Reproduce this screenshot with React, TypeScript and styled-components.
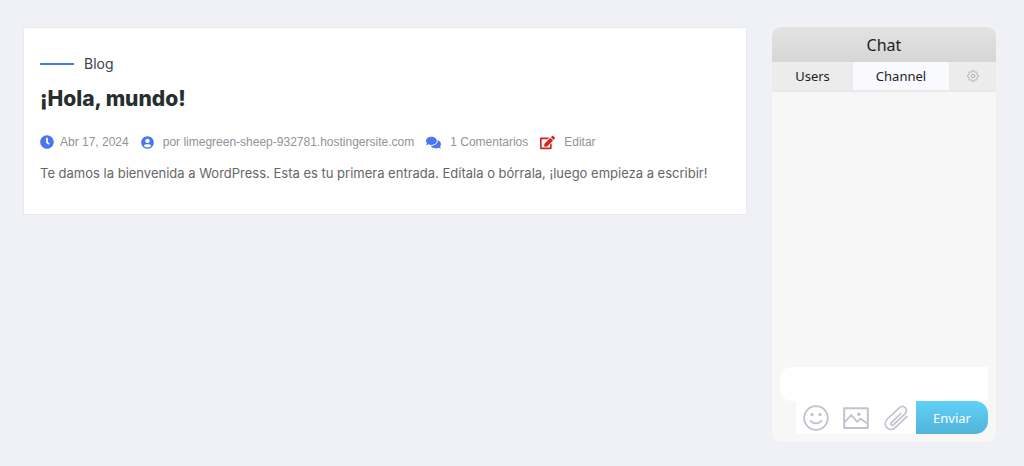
import React, { useState } from "react";
import styled, { createGlobalStyle } from "styled-components";
import { FaClock, FaUserCircle, FaComments, FaEdit } from "react-icons/fa";

const GlobalStyle = createGlobalStyle`
  * { box-sizing: border-box; }
  body { margin: 0; background: #f0f1f6; font-family: "Liberation Sans", Arial, sans-serif; }
  button, input { font: inherit; border: 0; padding: 0; margin: 0; background: none; }
  a { color: inherit; text-decoration: none; }
`;

const Page = styled.div`
  display: flex;
  align-items: flex-start;
  gap: 25px;
  min-height: 100vh;
  padding: 27px 28px 24px 23px;
`;

const Post = styled.article`
  flex: 1;
  min-width: 0;
  padding: 24px 16px 28px;
  background: #fff;
  border: 1px solid #e9eaee;
`;

const Category = styled.a`
  display: flex;
  align-items: center;
  gap: 10px;
  width: fit-content;
  font: 14px/24px Inter, sans-serif;
  color: #3d4143;

  &::before {
    content: "";
    width: 34px;
    height: 2px;
    background: #4a75f5;
  }
`;

const Title = styled.h1`
  margin: 5px 0 0;
  font: 800 21px/36px Inter, sans-serif;
  color: #272e2e;
`;

const Meta = styled.ul`
  display: flex;
  flex-wrap: wrap;
  gap: 0 12px;
  margin: 15px 0 0;
  padding: 0;
  list-style: none;
  font-size: 12px;
  line-height: 20px;
  color: #909497;
`;

const MetaItem = styled.li<{ $gap?: number; $tone?: string }>`
  display: flex;
  align-items: center;
  gap: ${(p) => p.$gap ?? 9}px;

  svg { color: ${(p) => p.$tone ?? "#4a75f5"}; }
`;

const Excerpt = styled.p`
  margin: 9px 0 0;
  padding-bottom: 1px;
  font: 13px/24px Inter, sans-serif;
  color: #666;
`;

const ChatPanel = styled.aside`
  display: flex;
  flex-direction: column;
  flex: 0 0 224px;
  min-height: calc(100vh - 51px);
  border-radius: 9px;
  overflow: hidden;
  background: #f7f7f7;
  font-family: "Noto Sans", sans-serif;
`;

const ChatTitle = styled.h2`
  margin: 0;
  padding-top: 2px;
  font-weight: 400;
  font-size: 16px;
  line-height: 33px;
  text-align: center;
  color: #222;
  background: linear-gradient(#e3e3e3, #d6d6d6);
`;

const Tabs = styled.div`
  display: grid;
  grid-template-columns: 81fr 96fr 47fr;
  height: 30px;
  padding-bottom: 1px;
  background: #ececec;
  border-bottom: 1px solid #e6e6e6;
`;

const Tab = styled.button<{ $active?: boolean }>`
  display: flex;
  align-items: center;
  justify-content: center;
  border-radius: 3px 3px 0 0;
  background: ${(p) => (p.$active ? "#f9fafd" : "transparent")};
  color: #222;
`;

const TabLabel = styled.span`
  font-size: 13px;
  line-height: 18px;
`;

const Messages = styled.div`
  flex: 1;
`;

const Composer = styled.form`
  display: flex;
  flex-direction: column;
  align-items: flex-end;
  padding: 0 8px;
  padding-bottom: 8px;
`;

const MessageInput = styled.input`
  width: 100%;
  height: 34px;
  padding: 0 12px;
  border-radius: 12px 0 0 12px;
  background: #fff;
  outline: none;
`;

const Actions = styled.div`
  display: flex;
  height: 33px;
`;

const ToolButton = styled.button`
  display: flex;
  align-items: center;
  justify-content: center;
  width: 40px;
  background: #fff;
  color: #c0c3cc;
`;

const SendButton = styled.button`
  width: 72px;
  border-radius: 0 13px 13px 0;
  background: linear-gradient(#61d0f8, #50b4d8);
  color: #fff;
  font-size: 13px;
`;

const Line = styled.svg`
  display: block;
  fill: none;
  stroke: currentColor;
  stroke-linecap: round;
  stroke-linejoin: round;
`;

const GearIcon = () => (
  <Line width="12" height="12" viewBox="0 0 24 24" strokeWidth="2" color="#b0b0b0">
    <path d="M9.8 3.6 L10.5 1.3 H13.5 L14.2 3.6 L16.4 4.5 L18.5 3.4 L20.6 5.5 L19.5 7.6 L20.4 9.8 L22.7 10.5 V13.5 L20.4 14.2 L19.5 16.4 L20.6 18.5 L18.5 20.6 L16.4 19.5 L14.2 20.4 L13.5 22.7 H10.5 L9.8 20.4 L7.6 19.5 L5.5 20.6 L3.4 18.5 L4.5 16.4 L3.6 14.2 L1.3 13.5 V10.5 L3.6 9.8 L4.5 7.6 L3.4 5.5 L5.5 3.4 L7.6 4.5 Z" />
    <circle cx="12" cy="12" r="3.5" />
  </Line>
);

const SmileIcon = () => (
  <Line width="26" height="26" viewBox="0 0 26 26" strokeWidth="1.8">
    <circle cx="13" cy="13" r="11.8" />
    <circle cx="9" cy="9.7" r="1.6" fill="currentColor" stroke="none" />
    <circle cx="17" cy="9.7" r="1.6" fill="currentColor" stroke="none" />
    <path d="M7.8 15.8 C9.8 19.3 16.2 19.3 18.2 15.8" />
  </Line>
);

const ImageIcon = () => (
  <Line width="26" height="26" viewBox="0 0 26 26" strokeWidth="1.8">
    <path d="M1.2 3.2 H24.8 V23 H1.2 Z" strokeWidth="2" />
    <path d="M1.8 17 L8.3 10 L14.2 16.8 L17.5 13.7 L24.2 18.3" />
    <circle cx="15.8" cy="9.3" r="1.8" fill="currentColor" stroke="none" />
  </Line>
);

const ClipIcon = () => (
  <Line width="26" height="26" viewBox="0 0 26 26" strokeWidth="1.7">
    <path d="M18 8.5 L8.6 17.3 C6.8 19.2 8.6 21.3 10.6 19.7 L21.7 9.2 C26 4.6 20.6 -1.2 16.2 2.8 L4.4 14 C-1.6 20.2 6.3 28.2 12.5 22.4 L24 11.4" />
  </Line>
);

export default function App() {
  const [tab, setTab] = useState("channel");
  return (
    <>
      <GlobalStyle />
      <Page>
        <Post>
          <Category href="#blog">Blog</Category>
          <Title>¡Hola, mundo!</Title>
          <Meta>
            <MetaItem $gap={6}><FaClock size={14} /><a href="#date">Abr 17, 2024</a></MetaItem>
            <MetaItem><FaUserCircle size={13} /><a href="#author">por limegreen-sheep-932781.hostingersite.com</a></MetaItem>
            <MetaItem><FaComments size={15} /><a href="#comments">1 Comentarios</a></MetaItem>
            <MetaItem $tone="#d4221f"><FaEdit size={15} /><a href="#edit">Editar</a></MetaItem>
          </Meta>
          <Excerpt>Te damos la bienvenida a WordPress. Esta es tu primera entrada. Edítala o bórrala, ¡luego empieza a escribir!</Excerpt>
        </Post>
        <ChatPanel>
          <ChatTitle>Chat</ChatTitle>
          <Tabs role="tablist">
            <Tab type="button" role="tab" aria-selected={tab === "users"} $active={tab === "users"} onClick={() => setTab("users")}><TabLabel>Users</TabLabel></Tab>
            <Tab type="button" role="tab" aria-selected={tab === "channel"} $active={tab === "channel"} onClick={() => setTab("channel")}><TabLabel>Channel</TabLabel></Tab>
            <Tab type="button" role="tab" aria-label="Settings" aria-selected={tab === "settings"} $active={tab === "settings"} onClick={() => setTab("settings")}><GearIcon /></Tab>
          </Tabs>
          <Messages />
          <Composer onSubmit={(e) => e.preventDefault()}>
            <MessageInput type="text" aria-label="Message" />
            <Actions>
              <ToolButton type="button" aria-label="Emoji"><SmileIcon /></ToolButton>
              <ToolButton type="button" aria-label="Image"><ImageIcon /></ToolButton>
              <ToolButton type="button" aria-label="Attach file"><ClipIcon /></ToolButton>
              <SendButton type="submit">Enviar</SendButton>
            </Actions>
          </Composer>
        </ChatPanel>
      </Page>
    </>
  );
}
